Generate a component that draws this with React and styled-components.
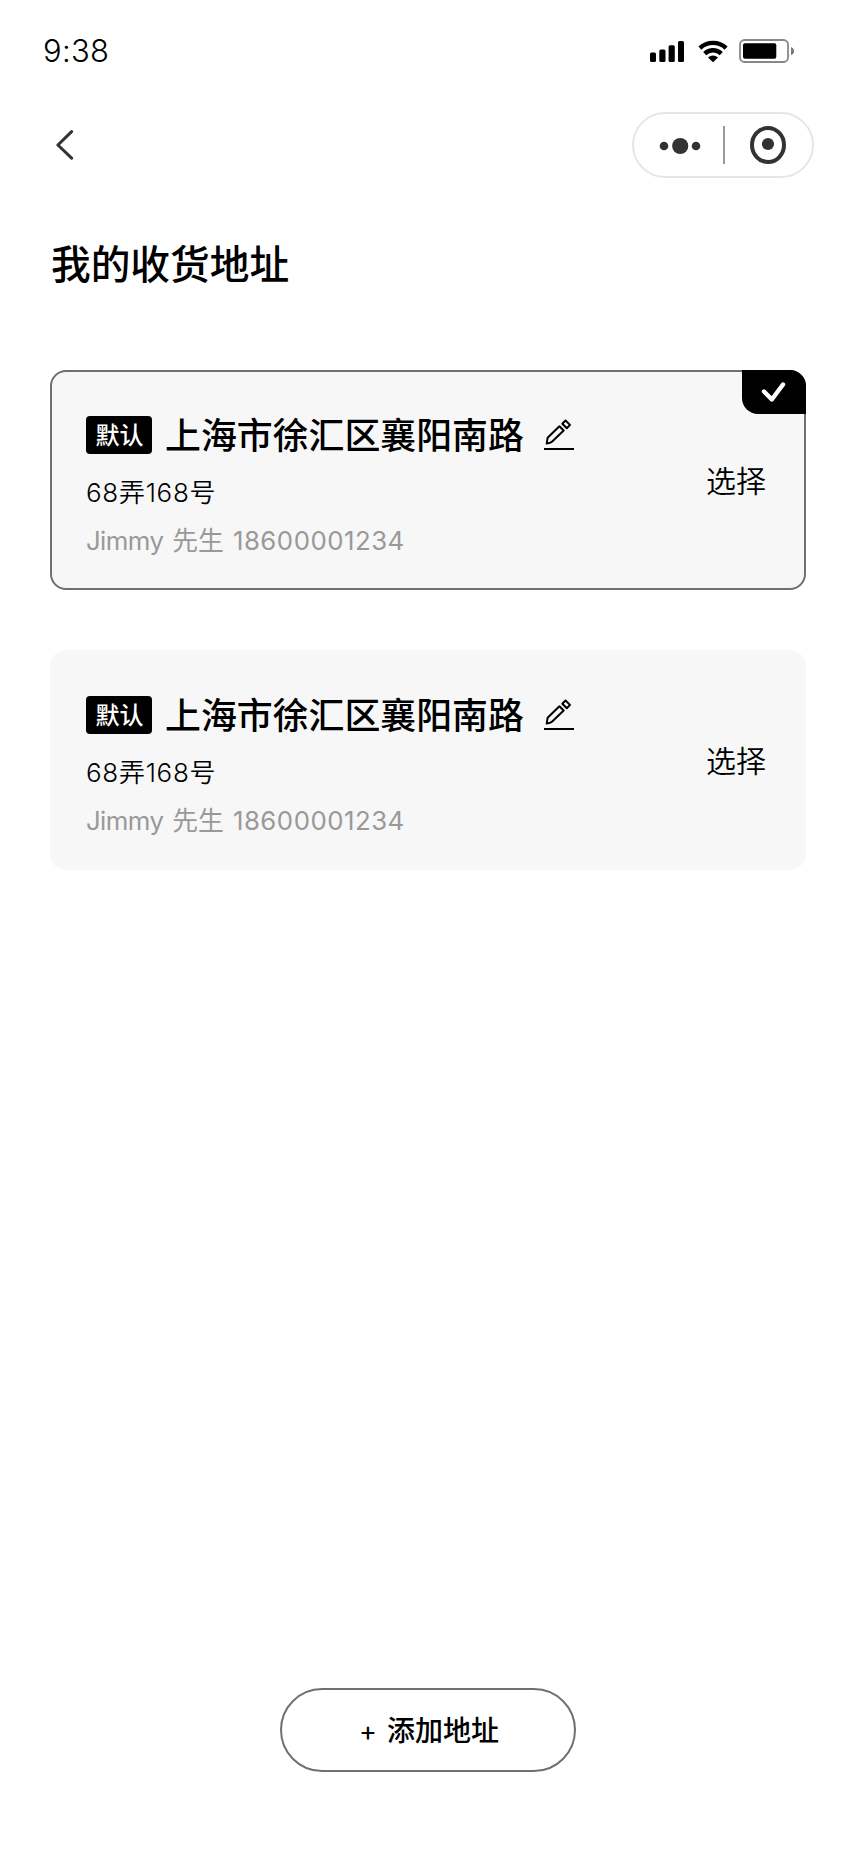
import React, { useState } from "react";
import styled, { createGlobalStyle } from "styled-components";

const addresses = [
  {
    id: 1,
    isDefault: true,
    area: "上海市徐汇区襄阳南路",
    detail: "68弄168号",
    name: "Jimmy",
    title: "先生",
    phone: "18600001234",
  },
  {
    id: 2,
    isDefault: true,
    area: "上海市徐汇区襄阳南路",
    detail: "68弄168号",
    name: "Jimmy",
    title: "先生",
    phone: "18600001234",
  },
];

const SignalIcon = () => (
  <svg width="34" height="22" viewBox="0 0 34 22" fill="#000">
    <rect x="0" y="12.5" width="6" height="9.5" rx="1.5" />
    <rect x="9.3" y="9.5" width="6.2" height="12.5" rx="1.5" />
    <rect x="18.6" y="5.3" width="6.2" height="16.7" rx="1.5" />
    <rect x="28" y="1" width="6" height="21" rx="1.5" />
  </svg>
);

const WifiIcon = () => (
  <svg width="30" height="22" viewBox="0 0 30 22">
    <g fill="none" stroke="#000" strokeWidth="4.4">
      <path d="M1.9 8.2a18.9 18.9 0 0 1 26.2 0" />
      <path d="M6.7 13.6a12 12 0 0 1 16.6 0" />
    </g>
    <path d="M10 17.6a7.2 7.2 0 0 1 10 0L15.6 21.8q-.6.5-1.2 0Z" fill="#000" />
  </svg>
);

const BatteryIcon = () => (
  <svg width="56" height="24" viewBox="0 0 56 24">
    <rect
      x="1"
      y="1"
      width="48"
      height="22"
      rx="4.5"
      fill="none"
      stroke="#888"
      strokeWidth="1.8"
    />
    <rect x="4" y="4.3" width="33.3" height="15.4" rx="2" fill="#000" />
    <path d="M52 8v8q3-1 3-4t-3-4Z" fill="#777" />
  </svg>
);

const BackIcon = () => (
  <svg width="18" height="32" viewBox="0 0 18 32">
    <path
      d="M15.6 2.6 1.9 16l13.7 13.2"
      fill="none"
      stroke="#333"
      strokeWidth="3"
      strokeLinecap="round"
      strokeLinejoin="round"
    />
  </svg>
);

const MoreIcon = () => (
  <svg width="42" height="20" viewBox="0 0 42 20" fill="#333">
    <circle cx="5" cy="11" r="4.3" />
    <circle cx="21.2" cy="11" r="8.1" />
    <circle cx="37" cy="11" r="4.3" />
  </svg>
);

const CloseIcon = () => (
  <svg width="36" height="38" viewBox="0 0 36 38">
    <ellipse
      cx="18"
      cy="19"
      rx="16"
      ry="17"
      fill="none"
      stroke="#333"
      strokeWidth="4"
    />
    <circle cx="18" cy="18" r="6.1" fill="#333" />
  </svg>
);

const EditIcon = () => (
  <svg width="30" height="32" viewBox="0 0 30 32">
    <g fill="none" stroke="#000" strokeWidth="2" strokeLinejoin="round">
      <path d="M2.7 24.6 3.6 18.8 15.4 7.3l4.3 4.2L8.2 22.4q-1.8 1.7-5.5 2.2Z" />
      <path d="m18.3 4.7 3.2-3.2 4.5 4.4-3.2 3.3Z" />
      <path d="M0 30h30" />
    </g>
  </svg>
);

const CheckIcon = () => (
  <svg width="26" height="22" viewBox="0 0 26 22">
    <path
      d="m3 10.5 7.8 8L22 3.5"
      fill="none"
      stroke="#fff"
      strokeWidth="4.4"
      strokeLinecap="round"
      strokeLinejoin="round"
    />
  </svg>
);

const App = () => {
  const [selected, setSelected] = useState(1);

  return (
    <>
      <GlobalStyle />
      <Page>
        <StatusBar>
          <Time>9:38</Time>
          <StatusIcons>
            <SignalIcon />
            <WifiIcon />
            <BatteryIcon />
          </StatusIcons>
        </StatusBar>
        <NavBar>
          <BackButton>
            <BackIcon />
          </BackButton>
          <Capsule>
            <MoreIcon />
            <CapsuleDivider />
            <CloseIcon />
          </Capsule>
        </NavBar>
        <Title>我的收货地址</Title>
        <AddressList>
          {addresses.map((address) => (
            <AddressCard key={address.id} $selected={address.id === selected}>
              <AddressInfo>
                <AreaRow>
                  {address.isDefault && <DefaultTag>默认</DefaultTag>}
                  <Area>{address.area}</Area>
                  <EditIcon />
                </AreaRow>
                <Detail>{address.detail}</Detail>
                <Contact>
                  <Name>{address.name}</Name>
                  <span>{address.title}</span>
                  <Phone>{address.phone}</Phone>
                </Contact>
              </AddressInfo>
              <SelectButton onClick={() => setSelected(address.id)}>
                选择
              </SelectButton>
              {address.id === selected && (
                <SelectedMark>
                  <CheckIcon />
                </SelectedMark>
              )}
            </AddressCard>
          ))}
        </AddressList>
        <Footer>
          <AddButton>
            <span>+</span>
            <span>添加地址</span>
          </AddButton>
        </Footer>
      </Page>
    </>
  );
};

const GlobalStyle = createGlobalStyle`
  * {
    box-sizing: border-box;
  }
  body {
    margin: 0;
    background: #fff;
    color: #000;
    font-family: Inter, "Noto Sans CJK SC", sans-serif;
  }
  button {
    padding: 0;
    border: none;
    background: none;
    color: inherit;
    font-family: inherit;
    cursor: pointer;
  }
  svg {
    display: block;
    flex-shrink: 0;
  }
`;

const Page = styled.div`
  display: flex;
  flex-direction: column;
  width: 856px;
  height: 1852px;
`;

const StatusBar = styled.div`
  display: flex;
  justify-content: space-between;
  align-items: center;
  height: 102px;
  padding: 0 61px 0 43px;
`;

const Time = styled.span`
  font-size: 31px;
  font-weight: 300;
  line-height: 40px;
  letter-spacing: 0.3px;
`;

const StatusIcons = styled.div`
  display: flex;
  align-items: center;
  gap: 14px;

  svg:last-child {
    margin-left: -3px;
  }
`;

const NavBar = styled.div`
  display: flex;
  justify-content: space-between;
  align-items: center;
  height: 86px;
  padding: 0 42px 0 56px;
`;

const BackButton = styled.button``;

const Capsule = styled.div`
  display: flex;
  align-items: center;
  width: 182px;
  height: 66px;
  padding: 0 25px;
  border: 2px solid #e6e6e6;
  border-radius: 33px;
`;

const CapsuleDivider = styled.div`
  width: 2px;
  height: 38px;
  margin: 0 25px 0 22px;
  background: #999;
`;

const Title = styled.h1`
  margin: 47px 0 0 51px;
  font-size: 39.7px;
  font-weight: 500;
  line-height: 60px;
`;

const AddressList = styled.div`
  display: flex;
  flex-direction: column;
  gap: 60px;
  margin: 75px 50px 0;
`;

const AddressCard = styled.div`
  position: relative;
  display: flex;
  justify-content: space-between;
  align-items: center;
  height: 220px;
  padding: 0 38px 0 34px;
  border: 2px solid ${({ $selected }) => ($selected ? "#707070" : "#f7f7f7")};
  border-radius: 16px;
  background: #f7f7f7;
`;

const AddressInfo = styled.div`
  display: flex;
  flex-direction: column;
  padding-top: 13px;
`;

const AreaRow = styled.div`
  display: flex;
  align-items: center;
  height: 44px;
`;

const DefaultTag = styled.span`
  width: 66px;
  height: 38px;
  margin-right: 13px;
  border-radius: 4px;
  background: #000;
  color: #fff;
  font-size: 24px;
  font-weight: 500;
  line-height: 39px;
  text-align: center;
  text-indent: 1px;
`;

const Area = styled.span`
  margin-right: 20px;
  padding-top: 2px;
  font-size: 35.9px;
  font-weight: 500;
  line-height: 46px;
`;

const Detail = styled.div`
  margin-top: 16px;
  font-size: 26px;
  font-weight: 350;
  letter-spacing: 0.7px;
  line-height: 40px;
`;

const Contact = styled.div`
  display: flex;
  gap: 9px;
  margin-top: 8px;
  color: #999;
  font-size: 25.8px;
  font-weight: 400;
  line-height: 40px;
`;

const Name = styled.span`
  letter-spacing: -0.6px;
`;

const Phone = styled.span`
  letter-spacing: 0.5px;
`;

const SelectButton = styled.button`
  padding-top: 2px;
  font-size: 30px;
  font-weight: 350;
  line-height: 44px;
`;

const SelectedMark = styled.div`
  position: absolute;
  top: -2px;
  right: -2px;
  display: flex;
  align-items: center;
  justify-content: center;
  width: 64px;
  height: 44px;
  border-radius: 0 16px 0 16px;
  background: #000;
`;

const Footer = styled.div`
  display: flex;
  justify-content: center;
  margin-top: auto;
  padding-bottom: 80px;
`;

const AddButton = styled.button`
  display: flex;
  align-items: center;
  justify-content: center;
  gap: 10px;
  width: 296px;
  height: 84px;
  padding: 2px 0 0 2px;
  border: 2px solid #707070;
  border-radius: 42px;
  font-size: 28px;
  font-weight: 500;
  line-height: 40px;

  span:first-child {
    padding-top: 1px;
    font-size: 27px;
    font-weight: 400;
  }
`;

export default App;
